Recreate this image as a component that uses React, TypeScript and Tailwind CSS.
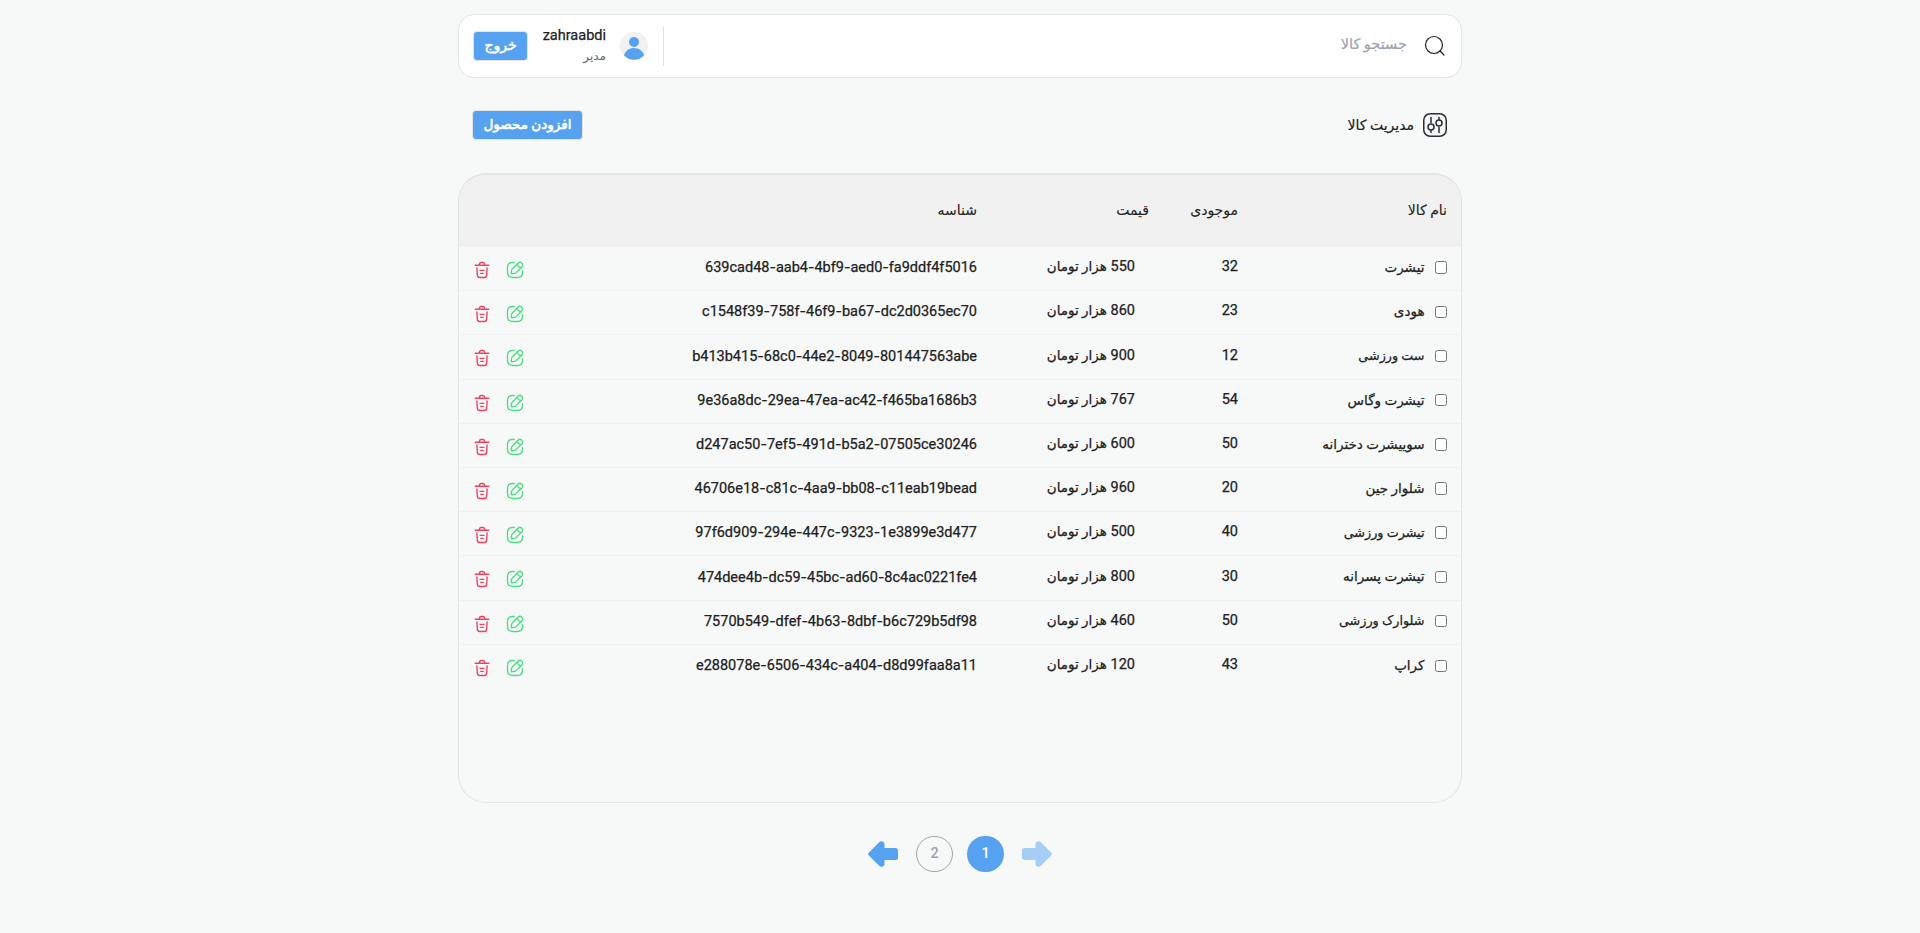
import React from "react";

const rows: [string, number, number, string][] = [
  ["تیشرت", 32, 550, "639cad48-aab4-4bf9-aed0-fa9ddf4f5016"],
  ["هودی", 23, 860, "c1548f39-758f-46f9-ba67-dc2d0365ec70"],
  ["ست ورزشی", 12, 900, "b413b415-68c0-44e2-8049-801447563abe"],
  ["تیشرت وگاس", 54, 767, "9e36a8dc-29ea-47ea-ac42-f465ba1686b3"],
  ["سوییشرت دخترانه", 50, 600, "d247ac50-7ef5-491d-b5a2-07505ce30246"],
  ["شلوار جین", 20, 960, "46706e18-c81c-4aa9-bb08-c11eab19bead"],
  ["تیشرت ورزشی", 40, 500, "97f6d909-294e-447c-9323-1e3899e3d477"],
  ["تیشرت پسرانه", 30, 800, "474dee4b-dc59-45bc-ad60-8c4ac0221fe4"],
  ["شلوارک ورزشی", 50, 460, "7570b549-dfef-4b63-8dbf-b6c729b5df98"],
  ["کراپ", 43, 120, "e288078e-6506-434c-a404-d8d99faa8a11"],
];

const columns = "grid grid-cols-[209px_89px_172px_1fr_auto] px-3.5";

function TrashIcon() {
  return (
    <svg viewBox="0 0 24 24" className="size-[18px] text-[#f43f5e]" fill="none" stroke="currentColor" strokeWidth="1.8" strokeLinecap="round" strokeLinejoin="round">
      <path d="M21 5.7H3" />
      <path d="M8.5 4.97l.22-1.31C8.88 2.71 9 2 10.69 2h2.62c1.69 0 1.82.75 1.97 1.67l.22 1.3" />
      <path d="M18.85 9.14l-.65 10.07C18.09 20.78 18 22 15.21 22H8.79C6 22 5.91 20.78 5.8 19.21L5.15 9.14" />
      <path d="M10.33 16.5h3.33M9.5 12.5h5" />
    </svg>
  );
}

function EditIcon() {
  return (
    <svg viewBox="0 0 24 24" className="size-[18px] text-[#4ade80]" fill="none" stroke="currentColor" strokeWidth="1.8" strokeLinecap="round" strokeLinejoin="round">
      <path d="M11 2H9C4 2 2 4 2 9v6c0 5 2 7 7 7h6c5 0 7-2 7-7v-2" />
      <path d="M16.04 3.02L8.16 10.9c-.3.3-.6.89-.66 1.32l-.43 3.01c-.16 1.09.61 1.85 1.7 1.7l3.01-.43c.42-.06 1.01-.36 1.32-.66l7.88-7.88c1.36-1.36 2-2.94 0-4.94-2-2-3.58-1.36-4.94 0z" />
      <path d="M14.91 4.15c.67 2.39 2.54 4.26 4.94 4.94" />
    </svg>
  );
}

function Arrow({ className }: { className: string }) {
  return (
    <svg viewBox="0 0 30 26" className={className} fill="currentColor">
      <path d="M.9 11.4 11.4.9C13 -.7 16.500 .3 16.500 3V7H27.500Q30 7 30 9.500V16.500Q30 19 27.500 19H16.500V23C16.500 25.700 13 26.700 11.400 25.100L.9 14.600Q-.6 13 .9 11.400Z" />
    </svg>
  );
}

function ProductId({ value }: { value: string }) {
  return (
    <span dir="ltr" className="pt-px text-right">
      {value.split("-").map((part, i) => (
        <React.Fragment key={i}>
          {i > 0 && <span className="font-['Inter'] text-[14px]">-</span>}
          {part}
        </React.Fragment>
      ))}
    </span>
  );
}

export default function App() {
  return (
    <div dir="rtl" className="flex h-[933px] flex-col items-center overflow-hidden bg-[#f7f9f9] pt-3.5 font-['Roboto','DejaVu_Sans',sans-serif] text-[14.5px] font-normal text-[#212121]">
      <header className="flex h-16 w-[1004px] items-center rounded-2xl border border-[#e4e4e4] bg-white px-3.5">
        <svg viewBox="0 0 24 24" className="size-6" fill="none" stroke="currentColor" strokeWidth="1.2" strokeLinecap="round">
          <circle cx="11" cy="11" r="8.500" />
          <path d="m17 17 4 4" />
        </svg>
        <span className="mr-4 pb-0.5 text-[14.5px] text-[#9ca3af] [-webkit-text-stroke:0.2px]">جستجو کالا</span>
        <div className="mr-auto flex items-center">
          <span className="h-10 w-px bg-[#e0e0e0]" />
          <svg viewBox="0 0 28 28" className="mr-[15px] size-7">
            <circle cx="14" cy="14" r="14" fill="#f1f1f1" />
            <circle cx="14" cy="10" r="5" fill="#56a2f1" />
            <path d="M4 23.500C5 19 9 16 14 16s9 3 10 7.500a14 14 0 0 1-20 0Z" fill="#56a2f1" />
          </svg>
          <div className="mr-3.5 w-[63px]">
            <div className="leading-5 [-webkit-text-stroke:0.25px]">zahraabdi</div>
            <div className="text-xs leading-5 text-[#606670]">مدیر</div>
          </div>
          <button className="mr-[15px] h-[30px] w-[55px] rounded border border-[#e4e4e4] bg-[#56a2f1] pb-0.5 text-sm text-white [-webkit-text-stroke:0.6px]">خروج</button>
        </div>
      </header>
      <div className="mt-8 flex h-[30px] w-[1004px] items-center pr-[15px] pl-3.5">
        <svg viewBox="0 0 24 24" className="size-6" fill="none" stroke="#292d32" strokeWidth="1.500" strokeLinecap="round">
          <rect x=".75" y=".75" width="22.500" height="22.500" rx="6.500" />
          <path d="M8 4.500v5M8 17.500v2M16 4.500v2M16 14.500v5" />
          <circle cx="8" cy="14" r="3" />
          <circle cx="16" cy="10" r="3" />
        </svg>
        <span className="mr-[9px] text-sm [-webkit-text-stroke:0.2px]">مدیریت کالا</span>
        <button className="mr-auto h-[30px] w-[111px] rounded border border-[#e4e4e4] bg-[#56a2f1] pb-0.5 text-[13.5px] text-white [-webkit-text-stroke:0.6px]">افزودن محصول</button>
      </div>
      <main className="mt-[33px] h-[630px] w-[1004px] overflow-hidden rounded-[28px] border border-t-2 border-[#e4e4e4]">
        <div className={columns + " h-[72px] items-center bg-[#f1f1f1] pb-[3px] text-sm [-webkit-text-stroke:0.1px]"}>
          <span>نام کالا</span>
          <span>موجودی</span>
          <span>قیمت</span>
          <span>شناسه</span>
        </div>
        {rows.map(([name, stock, price, id]) => (
          <div key={id} className={columns + " h-[44.2px] items-center border-b border-[#f1f1f1] pb-[3px] [-webkit-text-stroke:0.25px] last:border-0"}>
            <div className="flex items-center gap-2.5">
              <span className="mt-px size-[12.500px] rounded-[2.500px] border border-[#767676] bg-white" />
              <span className={name.includes("ورزشی") ? "text-[12.75px]" : "text-[13.5px]"}>{name}</span>
            </div>
            <span>{stock}</span>
            <span className="pr-3.5">{price} <span className="text-[13.5px]">هزار تومان</span></span>
            <ProductId value={id} />
            <div className="flex gap-[15px] pt-1.5">
              <EditIcon />
              <TrashIcon />
            </div>
          </div>
        ))}
      </main>
      <nav className="mt-[33px] flex h-9 items-center font-medium">
        <Arrow className="h-[26px] w-[30px] rotate-180 text-[#a6cdf5]" />
        <span className="mr-[18px] flex h-9 w-[37px] items-center justify-center rounded-full bg-[#56a2f1] text-white">1</span>
        <span className="mr-3.5 flex h-9 w-[37px] items-center justify-center rounded-full border border-[#9ca3af] text-[#9ca3af]">2</span>
        <Arrow className="mr-[18px] h-[26px] w-[30px] text-[#56a2f1]" />
      </nav>
    </div>
  );
}
